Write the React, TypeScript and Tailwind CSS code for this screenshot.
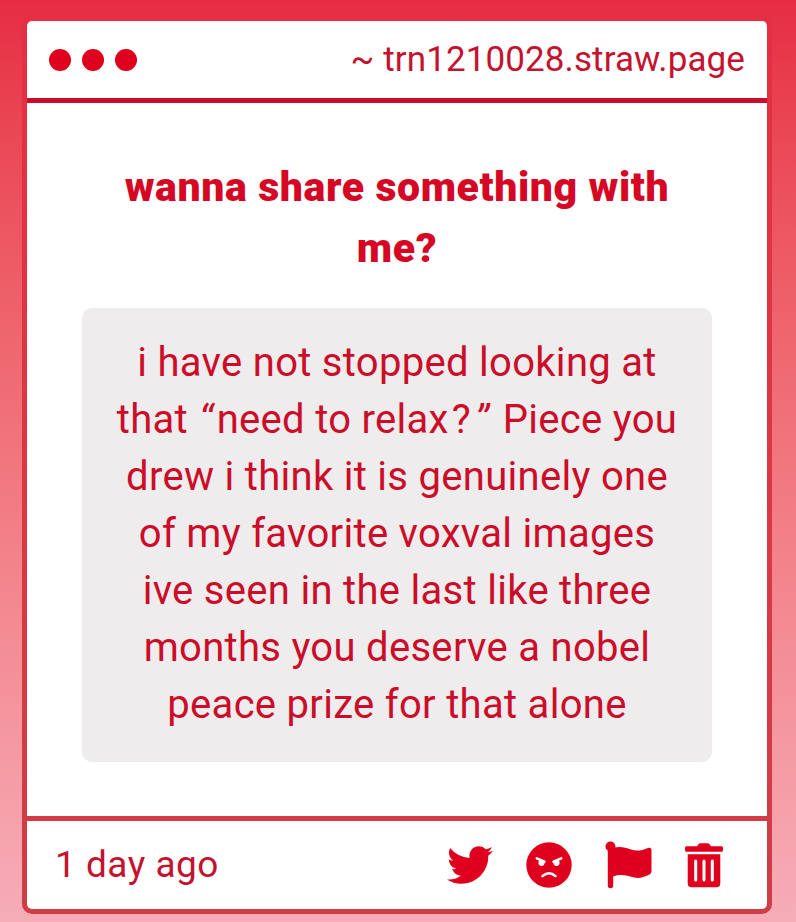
import { FaTwitter } from 'react-icons/fa'

const messageLines = [
  'i have not stopped looking at',
  'that “need to relax?” Piece you',
  'drew i think it is genuinely one',
  'of my favorite voxval images',
  'ive seen in the last like three',
  'months you deserve a nobel',
  'peace prize for that alone',
]

function AngryIcon() {
  return (
    <svg viewBox="0 0 46 46" className="h-[46px] w-[46px]" fill="none">
      <circle cx="23" cy="23" r="22.700" fill="currentColor" />
      <g fill="white">
        <circle cx="15.500" cy="20.800" r="3.100" />
        <circle cx="30.500" cy="20.800" r="3.100" />
      </g>
      <path d="M10.800 16.300l7.700 3.400M35.200 16.300l-7.700 3.400M16.500 34.200q6.500-6 13 0" stroke="white" strokeWidth="2.500" strokeLinecap="round" />
    </svg>
  )
}

function FlagIcon() {
  return (
    <svg viewBox="0 0 48 48" className="h-12 w-12" fill="currentColor">
      <circle cx="5.5" cy="5.5" r="5" />
      <path d="M2.8 5h5.4v39.5a2.7 2.7 0 0 1-5.4 0z" />
      <path d="M8 7c7-2 12-.6 18 1.600c6 2 11 .8 17-1.600c2-.8 3.500.2 3.500 2v21c0 2-1 3-2.500 3.800c-6 3.200-12 4-18 2c-6-2-11-2.800-18-.4z" />
    </svg>
  )
}

function TrashIcon() {
  return (
    <svg viewBox="0 0 40 46" className="mt-[2px] h-[46px] w-10" fill="currentColor">
      <path d="M2.500 3.300h10.500l1.600-2.400q.5-.7 1.500-.7h7.800q1 0 1.500.7l1.600 2.400h10.500q1.500 0 1.500 1.500v2.400q0 1.500-1.500 1.500h-35Q1 8.700 1 7.200V4.800q0-1.500 1.500-1.500z" />
      <path
        fillRule="evenodd"
        d="M3.700 11.200h32.600v29q0 4-4 4H7.700q-4 0-4-4zM10.200 18v19a1.500 1.500 0 0 0 3 0v-19a1.500 1.500 0 0 0-3 0zM18.500 18v19a1.500 1.500 0 0 0 3 0v-19a1.500 1.500 0 0 0-3 0zM26.800 18v19a1.500 1.500 0 0 0 3 0v-19a1.500 1.500 0 0 0-3 0z"
      />
    </svg>
  )
}

// curly quotes and the question mark get extra room
function MessageLine({ text }: { text: string }) {
  return (
    <p className="whitespace-nowrap">
      {text.split(/([“?”])/).map((part, i) => {
        if (part === '?') return <span key={i} className="mx-[3px]">{part}</span>
        if (part === '“' || part === '”') return <span key={i} className="mx-[2px] inline-block -skew-x-6">{part}</span>
        return part
      })}
    </p>
  )
}

function WindowHeader() {
  return (
    <header className="flex h-[82px] items-center justify-between border-b-[5px] border-[#c90d2b] pr-[22px] pl-[22px]">
      <div className="flex gap-[11px]">
        <span className="h-[22px] w-[22px] rounded-full bg-[#df001d]" />
        <span className="h-[22px] w-[22px] rounded-full bg-[#df001d]" />
        <span className="h-[22px] w-[22px] rounded-full bg-[#df001d]" />
      </div>
      <span className="pt-[2px] text-[35px] tracking-[0.1px] whitespace-nowrap text-[#c4122f]">~ trn1210028.straw.page</span>
    </header>
  )
}

function WindowFooter() {
  return (
    <footer className="flex h-[93px] items-center justify-between border-t-[5px] border-[#d33c47] pr-[43px] pl-[28px]">
      <span className="text-[37px] tracking-[0.5px] whitespace-nowrap text-[#c4122f]">1 day ago</span>
      <div className="flex items-center text-[#df001d]">
        <button className="mr-[33px]"><FaTwitter className="h-[46px] w-[46px]" /></button>
        <button className="mr-[33px]"><AngryIcon /></button>
        <button className="mr-[31px]"><FlagIcon /></button>
        <button><TrashIcon /></button>
      </div>
    </footer>
  )
}

export default function App() {
  return (
    <div className="h-[922px] w-[796px] overflow-hidden bg-linear-to-b from-[#e62c43] to-[#f6adb8] pt-4 pl-[22px] font-['Roboto',sans-serif]">
      <div className="h-[898px] w-[750px] rounded-[10px] bg-linear-to-b from-[#e62e44] via-[#dc3743] to-[#cf3d47] p-[5px]">
        <div className="flex h-full flex-col overflow-hidden rounded-[5px] bg-white">
          <WindowHeader />
          <main className="flex flex-1 flex-col items-center pt-[54px]">
            <h1 className="text-center text-[41px] leading-[61px] font-black tracking-[0.6px] whitespace-nowrap text-[#d50724]">
              wanna share something with
              <br />
              me?
            </h1>
            <div className="mt-[29px] h-[454px] w-[630px] rounded-[10px] bg-[#eeecec] pt-[26px] text-center text-[40px] leading-[57px] tracking-[0.3px] text-[#cb0d29]">
              {messageLines.map((line) => (
                <MessageLine key={line} text={line} />
              ))}
            </div>
          </main>
          <WindowFooter />
        </div>
      </div>
    </div>
  )
}
